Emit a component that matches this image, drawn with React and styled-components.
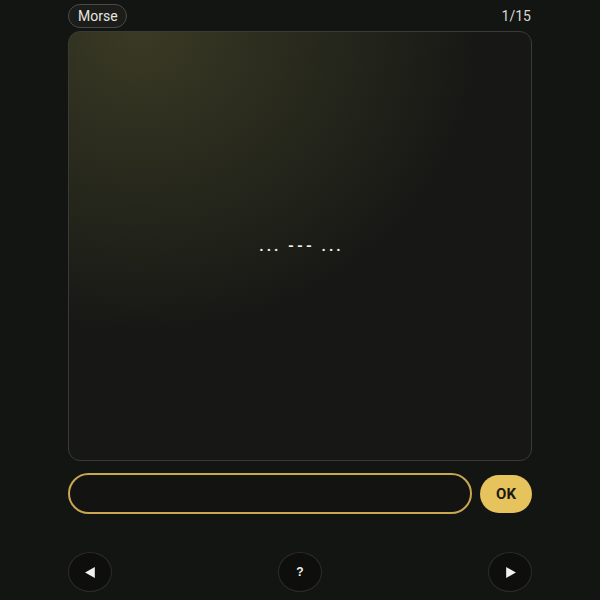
import React from 'react';
import styled, { createGlobalStyle } from 'styled-components';

const GlobalStyle = createGlobalStyle`
  html, body {
    margin: 0;
    padding: 0;
    background: #131512;
    font-family: Roboto, "Noto Sans", sans-serif;
    color: #e8e8e2;
  }
`;

const Page = styled.div`
  width: 600px;
  height: 600px;
  display: flex;
  justify-content: center;
  box-sizing: border-box;
  padding-top: 4px;
`;

const Column = styled.div`
  width: 464px;
  display: flex;
  flex-direction: column;
`;

const TopBar = styled.div`
  display: flex;
  justify-content: space-between;
  align-items: center;
  height: 24px;
`;

const ModePill = styled.div`
  height: 24px;
  box-sizing: border-box;
  padding: 0 8px 0 9px;
  border: 1px solid #4a4b46;
  border-radius: 12px;
  background: #1c1d1a;
  display: flex;
  align-items: center;
  font-size: 14px;
  color: #e6e6e0;
`;

const Counter = styled.div`
  font-size: 14px;
  color: #d8d8d2;
  padding-right: 1px;
`;

const Card = styled.div`
  margin-top: 3px;
  height: 430px;
  box-sizing: border-box;
  border: 1px solid #3a3b36;
  border-radius: 12px;
  background:
    radial-gradient(ellipse 340px 300px at 70px 0px, rgba(66, 66, 40, 0.8), rgba(66, 66, 40, 0) 100%),
    #171815;
  display: flex;
  align-items: center;
  justify-content: center;
`;

const Code = styled.div`
  font-size: 15px;
  font-weight: 700;
  letter-spacing: 3px;
  color: #f2f2ec;
  font-family: Roboto, sans-serif;
  margin-top: -1px;
  padding-left: 3px;
`;

const AnswerRow = styled.div`
  margin-top: 12px;
  display: flex;
  align-items: center;
  gap: 8px;
`;

const AnswerInput = styled.input`
  flex: 1;
  height: 41px;
  box-sizing: border-box;
  border: 2px solid #c9a850;
  border-radius: 21px;
  background: #131311;
  outline: none;
  padding: 0 16px;
  color: #eee;
  font-size: 15px;
`;

const OkButton = styled.button`
  width: 52px;
  height: 38px;
  border: none;
  border-radius: 19px;
  background: #e6c35c;
  color: #1a1a14;
  font-family: Roboto, sans-serif;
  font-weight: 700;
  font-size: 15px;
  cursor: pointer;
`;

const NavRow = styled.div`
  margin-top: 38px;
  display: flex;
  justify-content: space-between;
  align-items: center;
`;

const RoundButton = styled.button`
  width: 44px;
  height: 40px;
  border-radius: 50%;
  border: 1px solid #2c2d2a;
  background: #0e0f0d;
  color: #f0f0ea;
  display: flex;
  align-items: center;
  justify-content: center;
  font-size: 12px;
  font-weight: 700;
  padding: 0;
  cursor: pointer;
`;

const Arrow = ({ dir }) => (
  <svg width="13" height="13" viewBox="0 0 12 12">
    {dir === 'left' ? (
      <polygon points="10,1 10,11 1,6" fill="#f2f2ec" />
    ) : (
      <polygon points="2,1 2,11 11,6" fill="#f2f2ec" />
    )}
  </svg>
);

export default function App() {
  return (
    <>
      <GlobalStyle />
      <Page>
        <Column>
          <TopBar>
            <ModePill>Morse</ModePill>
            <Counter>1/15</Counter>
          </TopBar>
          <Card>
            <Code>... --- ...</Code>
          </Card>
          <AnswerRow>
            <AnswerInput />
            <OkButton>OK</OkButton>
          </AnswerRow>
          <NavRow>
            <RoundButton><Arrow dir="left" /></RoundButton>
            <RoundButton>?</RoundButton>
            <RoundButton><Arrow dir="right" /></RoundButton>
          </NavRow>
        </Column>
      </Page>
    </>
  );
}
